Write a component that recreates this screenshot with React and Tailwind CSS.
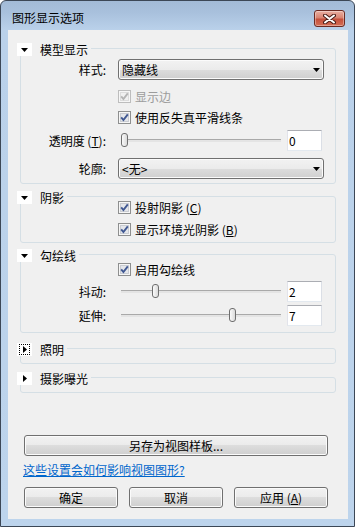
import React from "react";

const btnBg =
    "border border-[#707070] rounded-[3px] bg-[linear-gradient(#f2f2f2_0%,#ebebeb_50%,#dddddd_50%,#cfcfcf_100%)] shadow-[inset_0_0_0_1px_#fbfbfb]";

const Tri = ({ dir }) =>
    dir === "right" ? (
        <svg width="4" height="7" viewBox="0 0 4 7">
            <path d="M0 0 L4 3.5 L0 7 Z" fill="#000" />
        </svg>
    ) : (
        <svg width="7" height="4" viewBox="0 0 7 4">
            <path d="M0 0 L7 0 L3.5 4 Z" fill="#000" />
        </svg>
    );

const CheckBox = ({ disabled }) => (
    <svg width="13" height="13" viewBox="0 0 13 13" className="shrink-0">
        <rect x="0.5" y="0.5" width="12" height="12" fill="#f6f6f6" stroke={disabled ? "#bdbdbd" : "#8e8f8f"} />
        <rect x="2.5" y="2.5" width="8" height="8" fill={disabled ? "#f0f0f0" : "#e4e6ea"} stroke={disabled ? "#dcdcdc" : "#c9ccd2"} />
        <path
            d="M3.2 6.4 L5.4 9 L9.8 3.3"
            fill="none"
            stroke={disabled ? "#b4b4b4" : "#405892"}
            strokeWidth="1.9"
        />
    </svg>
);

const Section = ({ label, dir, focus, className, children }) => (
    <div className={`relative mx-[12px] box-border rounded-[3px] border border-[#d5dfe5] ${className}`}>
        <div className="absolute left-[-4px] top-[-6px] flex h-[13px] items-center bg-[#f0f0f0] pr-[3px]">
            <div className="flex h-[13px] w-[15px] items-center justify-center bg-white">
                {focus ? (
                    <div className="flex h-[11px] w-[11px] items-center justify-center border border-dotted border-black">
                        <Tri dir={dir} />
                    </div>
                ) : (
                    <Tri dir={dir} />
                )}
            </div>
            <span className="ml-[8px] text-[12px] leading-[13px]">{label}</span>
        </div>
        {children}
    </div>
);

const Combo = ({ value }) => (
    <div className={`flex h-[21px] w-[206px] items-center justify-between pl-[3px] pr-[3px] ${btnBg}`}>
        <span className="text-[12px] leading-[14px]">{value}</span>
        <Tri />
    </div>
);

const NumBox = ({ value }) => (
    <div className="ml-[1px] flex h-[21px] w-[35px] items-center border border-[#abadb3] border-b-[#e3e9ef] border-l-[#e2e3ea] border-r-[#dbdfe6] bg-white pl-[1px] text-[12px] leading-[14px]">
        {value}
    </div>
);

const Slider = ({ pos }) => (
    <div className="relative h-[21px] w-[168px]">
        <div className="absolute left-[3px] right-[5px] top-[9px] h-[3px] border-t border-[#a9a9a9] bg-[#e4e4e4]" />
        <div
            className="absolute top-[3px] h-[14px] w-[7px] rounded-[3px] border border-[#6f6f6f] bg-[linear-gradient(to_right,#fafafa,#dadada)]"
            style={{ left: pos }}
        />
    </div>
);

const Label = ({ children }) => <div className="w-[85px] text-right text-[12px] leading-[14px]">{children}</div>;

const CheckRow = ({ mt, disabled, children }) => (
    <div className={`flex h-[13px] items-center pl-[97px] ${mt}`}>
        <CheckBox disabled={disabled} />
        <span className={`ml-[4px] text-[12px] leading-[14px] ${disabled ? "text-[#9c9c9c]" : "text-black"}`}>
            {children}
        </span>
    </div>
);

const Btn = ({ className, children }) => (
    <div className={`flex h-[21px] items-center justify-center text-[12px] leading-[14px] ${btnBg} ${className}`}>
        {children}
    </div>
);

export default function App() {
    return (
        <div className="h-[527px] w-[355px] bg-white font-['Noto_Sans_CJK_SC',sans-serif] text-black">
            <div className="box-border flex h-[527px] w-[355px] flex-col rounded-t-[6px] border border-[#3c4756] bg-[linear-gradient(#a3bbd7,#a9c1dd_12px,#bad1ea_29px,#bdd4ec)]">
                <div className="flex h-[29px] items-start justify-between pl-[11px] pr-[9px]">
                    <span className="pt-[10px] text-[12px] leading-[14px]">图形显示选项</span>
                    <div className="mt-[9px] flex h-[17px] w-[31px] items-center justify-center rounded-[3px] border border-[#6b2a22] bg-[linear-gradient(#eab0a3,#d88371_45%,#c5503c_55%,#d46e55)] shadow-[inset_0_0_0_1px_rgba(255,255,255,0.35)]">
                        <svg width="13" height="10" viewBox="0 0 13 10">
                            <path d="M2 1.5 L11 8.5 M11 1.5 L2 8.5" stroke="#4b1d17" strokeWidth="4" strokeLinecap="round" />
                            <path d="M2 1.5 L11 8.5 M11 1.5 L2 8.5" stroke="#ffffff" strokeWidth="2" strokeLinecap="round" />
                        </svg>
                    </div>
                </div>
                <div className="flex pl-[7px]">
                    <div className="flex h-[489px] w-[340px] flex-col bg-[#f0f0f0]">
                        <Section label="模型显示" className="mt-[18px] h-[136px]">
                            <div className="mt-[10px] flex h-[21px] items-center">
                                <Label>样式:</Label>
                                <div className="ml-[12px]">
                                    <Combo value="隐藏线" />
                                </div>
                            </div>
                            <CheckRow mt="mt-[10px]" disabled>
                                显示边
                            </CheckRow>
                            <CheckRow mt="mt-[8px]">使用反失真平滑线条</CheckRow>
                            <div className="mt-[6px] flex h-[21px] items-center">
                                <Label>
                                    透明度 (<u>T</u>):
                                </Label>
                                <div className="ml-[12px] flex items-center">
                                    <Slider pos={3} />
                                    <NumBox value="0" />
                                </div>
                            </div>
                            <div className="mt-[7px] flex h-[21px] items-center">
                                <Label>轮廓:</Label>
                                <div className="ml-[12px]">
                                    <Combo value="<无>" />
                                </div>
                            </div>
                        </Section>

                        <Section label="阴影" className="mt-[12px] h-[47px]">
                            <CheckRow mt="mt-[4px]">
                                投射阴影 (<u>C</u>)
                            </CheckRow>
                            <CheckRow mt="mt-[9px]">
                                显示环境光阴影 (<u>B</u>)
                            </CheckRow>
                        </Section>

                        <Section label="勾绘线" className="mt-[11px] h-[79px]">
                            <CheckRow mt="mt-[8px]">启用勾绘线</CheckRow>
                            <div className="mt-[5px] flex h-[21px] items-center">
                                <Label>抖动:</Label>
                                <div className="ml-[12px] flex items-center">
                                    <Slider pos={34} />
                                    <NumBox value="2" />
                                </div>
                            </div>
                            <div className="mt-[3px] flex h-[21px] items-center">
                                <Label>延伸:</Label>
                                <div className="ml-[12px] flex items-center">
                                    <Slider pos={111} />
                                    <NumBox value="7" />
                                </div>
                            </div>
                        </Section>

                        <Section label="照明" dir="right" focus className="mt-[15px] h-[16px]" />
                        <Section label="摄影曝光" dir="right" className="mt-[13px] h-[16px]" />

                        <Btn className="ml-[16px] mt-[42px] w-[304px]">另存为视图样板...</Btn>

                        <a className="ml-[15px] mt-[7px] w-fit text-[12px] leading-[14px] text-[#0066cc] underline">
                            这些设置会如何影响视图图形?
                        </a>

                        <div className="ml-[16px] mt-[10px] flex gap-[11px]">
                            <Btn className="w-[94px]">确定</Btn>
                            <Btn className="w-[94px]">取消</Btn>
                            <Btn className="w-[94px]">
                                应用 (<u>A</u>)
                            </Btn>
                        </div>
                    </div>
                </div>
            </div>
        </div>
    );
}
